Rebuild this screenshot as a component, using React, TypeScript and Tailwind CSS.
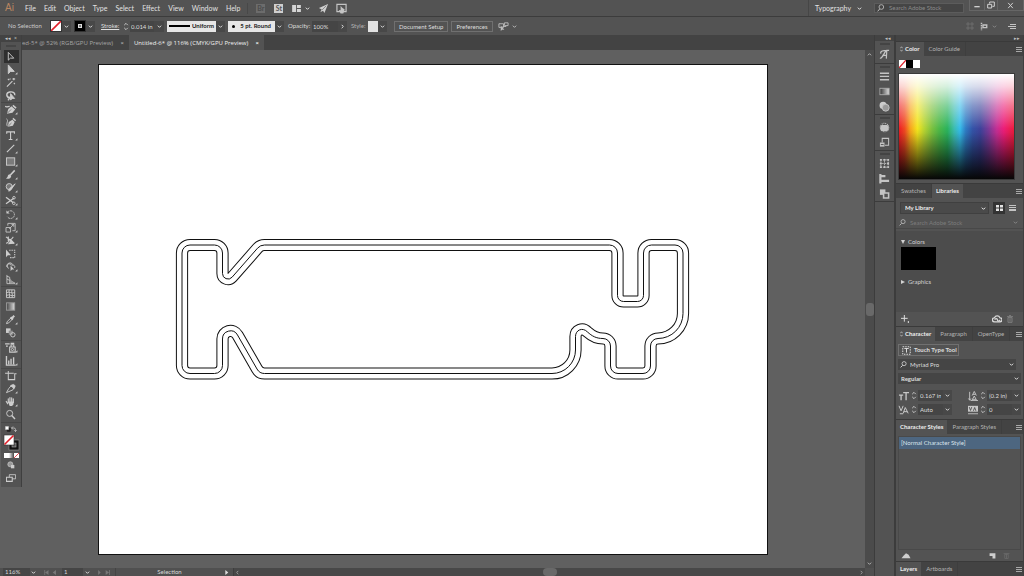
import type { ReactNode } from "react";

type IconProps = { children: ReactNode; className?: string };

function Icon({ children, className = "h-[11px] w-[11px]" }: IconProps) {
  return (
    <svg
      viewBox="0 0 12 12"
      className={`shrink-0 ${className}`}
      fill="none"
      stroke="currentColor"
      strokeWidth="1"
      aria-hidden="true"
    >
      {children}
    </svg>
  );
}

function Chevron({ className = "h-[5px] w-[5px]" }: { className?: string }) {
  return (
    <Icon className={className}>
      <path d="M2 4l4 4 4-4" strokeWidth="2.4" />
    </Icon>
  );
}

function DropButton({ label, className = "w-[9px]" }: { label: string; className?: string }) {
  return (
    <button
      aria-label={label}
      className={`flex h-[11px] shrink-0 items-center justify-center bg-[#484848] text-[#dcdcdc] ${className}`}
    >
      <Chevron />
    </button>
  );
}

function Spinner({ label }: { label: string }) {
  return (
    <button aria-label={label} className="flex h-[11px] w-[8px] shrink-0 items-center justify-center text-[#cfcfcf]">
      <svg viewBox="0 0 6 10" className="h-[9px] w-[6px]" fill="none" stroke="currentColor" aria-hidden="true">
        <path d="M1 3.500l2-2 2 2M1 6.500l2 2 2-2" />
      </svg>
    </button>
  );
}

function NoneSwatch({ className }: { className: string }) {
  return (
    <svg viewBox="0 0 10 10" preserveAspectRatio="none" className={`shrink-0 ${className}`} aria-hidden="true">
      <rect width="10" height="10" fill="#fff" />
      <path d="M0 10L10 0" stroke="#e0202a" strokeWidth="1.6" />
    </svg>
  );
}

function PanelMenu({ label }: { label: string }) {
  return (
    <button aria-label={label} className="ml-auto flex w-[9px] items-center justify-center text-[#a8a8a8]">
      <svg viewBox="0 0 6 6" className="h-[6px] w-[6px]" stroke="currentColor" aria-hidden="true">
        <path d="M0 1.500h6M0 3.500h6M0 5.500h6" />
      </svg>
    </button>
  );
}

function PanelTabs({ tabs, active, sort }: { tabs: string[]; active: number; sort?: boolean }) {
  return (
    <div role="tablist" className="flex h-[15px] shrink-0 border-t border-[#3a3a3a] bg-[#434343]">
      {tabs.map((t, i) => (
        <button
          key={t}
          role="tab"
          aria-selected={i === active}
          className={
            i === active
              ? "flex items-center gap-[2px] whitespace-nowrap bg-[#535353] px-[4px] font-bold text-[#ececec]"
              : "flex items-center whitespace-nowrap border-r border-[#3e3e3e] px-[5px] text-[#b4b4b4]"
          }
        >
          {i === active && sort && (
            <svg viewBox="0 0 4 8" className="h-[6px] w-[3px]" fill="none" stroke="#c8c8c8" aria-hidden="true">
              <path d="M0.500 3L2 1l1.500 2M0.500 5L2 7l1.500-2" />
            </svg>
          )}
          {t}
        </button>
      ))}
      <PanelMenu label={`${tabs[active]} panel menu`} />
    </div>
  );
}

type Tool = { name: string; art: ReactNode; more?: boolean };

const toolGroups: Tool[][] = [
  [
    { name: "Selection", art: <path d="M3.500 1.500v8.500l2.300-2.200h3.700z" /> },
    { name: "Direct Selection", more: true, art: <path d="M3.500 1v9.500l2.500-2.400h4z" fill="currentColor" /> },
    {
      name: "Magic Wand",
      art: <path d="M2 10.500L8 4.500M9.500 1v2.500M8 2.200h3M3 2l1.500 1.500M9.500 6.500l1.200 1.200M5.500 1.500v1.200" strokeWidth="1.200" />,
    },
    {
      name: "Lasso",
      art: (
        <>
          <path d="M4 8C1 7 1 3 5 2.200s6 1.500 5.500 3.500M3.500 6.500c-1.500 1 0 2.500 1 1.500s0 2.500-1.500 3" strokeWidth="1.500" />
          <path d="M6 4v7l1.800-1.800h2.600z" fill="currentColor" />
        </>
      ),
    },
  ],
  [
    {
      name: "Pen",
      more: true,
      art: (
        <>
          <path d="M0 2.500c2 1.500 3 0 5 0" strokeWidth="1.300" />
          <path d="M2 10.500l1.500-5 3.500-3 4 3.500-3 3.500z" fill="currentColor" stroke="none" />
          <path d="M2.500 10L6.500 6" stroke="#535353" strokeWidth=".7" />
          <path d="M8.500 1.500l3.500 3" strokeWidth="1.600" />
        </>
      ),
    },
    {
      name: "Curvature",
      art: (
        <>
          <path d="M1.500 2c3 2-1 5 1 8" />
          <path d="M3 10.500l1-5 4-2.500 2.500 2.500-2 4z" fill="currentColor" stroke="none" />
          <path d="M3.500 10L7 6.500" stroke="#535353" strokeWidth=".7" />
          <path d="M8.500 1.500L11.500 4" strokeWidth="1.500" />
        </>
      ),
    },
    { name: "Type", more: true, art: <path d="M1.800 4V2h8.400v2M6 2v8.500M4 10.300h4" strokeWidth="1.200" /> },
    { name: "Line Segment", more: true, art: <path d="M2 10L10 2" strokeWidth="1.200" /> },
    {
      name: "Rectangle",
      more: true,
      art: <rect x="1.500" y="2" width="9" height="8" fill="#7b7b7b" />,
    },
    {
      name: "Paintbrush",
      more: true,
      art: (
        <>
          <path d="M10.500 1.500L5.800 6.500" strokeWidth="1.700" />
          <path d="M5.500 5.800c-2 0-2.500 1.500-2.700 2.700L1 10.500c3 .5 5.500-.5 5.700-3z" fill="currentColor" stroke="none" />
        </>
      ),
    },
    {
      name: "Shaper",
      more: true,
      art: (
        <>
          <circle cx="4.500" cy="5" r="3.300" fill="#777" />
          <path d="M11 2L6 9l-2 1 .5-2.500z" fill="currentColor" />
        </>
      ),
    },
    {
      name: "Scissors",
      more: true,
      art: (
        <>
          <path d="M1 2.500l8 6M1 9.500l8.500-6" strokeWidth="1.400" />
          <circle cx="9.700" cy="3" r="1.400" />
          <circle cx="9.500" cy="9" r="1.400" />
        </>
      ),
    },
  ],
  [
    {
      name: "Rotate",
      more: true,
      art: (
        <>
          <path d="M3 3.200a4.200 4.200 0 1 1-.5 5.300" strokeDasharray="2 .8" />
          <path d="M1.500 1.500v3.500H5z" fill="currentColor" stroke="none" />
        </>
      ),
    },
    {
      name: "Scale",
      more: true,
      art: <path d="M1 6h5v5H1zM3 4V1.500h8v8H8M4.500 7.500l5-5M7 2.800h2.500v2.400" strokeWidth=".9" />,
    },
    {
      name: "Width",
      more: true,
      art: (
        <>
          <path d="M1 2l9 7M3.500 1.500v5M1 9c3 0 3-3 5-4s2-2 3-3" strokeWidth="1.200" />
          <path d="M3 10l4-5 3.500 4.500z" fill="currentColor" stroke="none" />
        </>
      ),
    },
    {
      name: "Free Transform",
      art: (
        <>
          <path d="M4.500 2.500h6v8h-6" strokeDasharray="1.500 1" strokeWidth="1.200" />
          <path d="M1 1.500v8.500l2-2h3.500z" fill="currentColor" stroke="none" />
        </>
      ),
    },
    {
      name: "Shape Builder",
      more: true,
      art: (
        <>
          <path d="M2 6.500a3.500 3.500 0 0 1 6.500-2.500M4 8a2.500 2.500 0 1 1 3-3.500c3-.5 4 1 3.500 3" />
          <path d="M6 5v6l1.600-1.600H10z" fill="currentColor" stroke="none" />
        </>
      ),
    },
    {
      name: "Perspective Grid",
      more: true,
      art: (
        <>
          <path d="M2 1v9.500h9M2 2.500l3 1v7M2 5.500l9 4.500" strokeWidth=".9" />
          <path d="M5 4l4 6H5z" fill="#999" stroke="none" />
        </>
      ),
    },
  ],
  [
    {
      name: "Mesh",
      art: <path d="M1.500 2h9v8.500h-9zM1.500 5c3-1.500 6 1.500 9 0M1.500 8c3-1.500 6 1.500 9 0M4.500 2c-1 3 1.500 5 0 8.500M7.500 2c-1 3 1.500 5 0 8.500" />,
    },
    {
      name: "Gradient",
      art: (
        <>
          <defs>
            <linearGradient id="tool-gradient">
              <stop stopColor="#444" />
              <stop offset="1" stopColor="#ddd" />
            </linearGradient>
          </defs>
          <rect x="1.500" y="2" width="9" height="8" fill="url(#tool-gradient)" stroke="#999" />
        </>
      ),
    },
    {
      name: "Eyedropper",
      more: true,
      art: (
        <>
          <path d="M1.500 10.500l1-2.500L7 3.800l1.400 1.400L4 9.700z" />
          <path d="M6 3.500L8.500 6M7.500 4.500L10 2" strokeWidth="2.200" />
        </>
      ),
    },
    {
      name: "Blend",
      art: (
        <>
          <rect x="1" y="1.500" width="5" height="5" fill="#ccc" stroke="none" />
          <rect x="4" y="4" width="4.500" height="4.500" fill="#8e8e8e" stroke="none" />
          <circle cx="8.500" cy="8.500" r="2.400" />
        </>
      ),
    },
  ],
  [
    {
      name: "Symbol Sprayer",
      more: true,
      art: (
        <>
          <path d="M0 2h5M1 4.500h2M5 5.500h6v5.500H5zM6.500 5V3h3v2M6 1.500h4" strokeWidth="1.200" />
          <circle cx="8" cy="8.200" r="1.200" />
        </>
      ),
    },
    {
      name: "Column Graph",
      more: true,
      art: <path d="M1.500 1v10h10M4 10V6M6.500 10V4M9.300 10V2.500" strokeWidth="1.500" />,
    },
  ],
  [
    { name: "Artboard", art: <path d="M3.500 1v2M0 3.500h9.500M3.500 3.500v7h7v-7M10.500 4h2" strokeWidth="1.100" /> },
    {
      name: "Slice",
      more: true,
      art: (
        <>
          <path d="M1.500 10.500L4 6l3-3.500 3 1.500-1.500 3.500z" />
          <path d="M6 3l4 3 1-3-2-1.500z" fill="currentColor" />
        </>
      ),
    },
    {
      name: "Hand",
      more: true,
      art: (
        <>
          <path d="M3.500 7V3M5.300 6V1.800M7.200 6V2M9 7V3.200M2.800 8.500L1.300 6" strokeWidth="1.300" strokeLinecap="round" />
          <path d="M3 6h6.600L9 9.500 7.500 11H5z" fill="currentColor" stroke="none" />
        </>
      ),
    },
    {
      name: "Zoom",
      art: (
        <>
          <circle cx="5" cy="4.800" r="3.300" />
          <path d="M7.300 7.200l3.500 3.600" strokeWidth="1.600" />
        </>
      ),
    },
  ],
];

const dockGroups: Tool[][] = [
  [
    {
      name: "Glyphs",
      art: <path d="M1 10c3 1 5-8 7.500-8.500L8 10.500M3.500 7H8.500M2 5c-1-3 3-3.500 6.500-3.500H11" strokeWidth="1.300" />,
    },
  ],
  [
    { name: "Stroke", art: <path d="M1 2.500h10M1 5.800h10M1 9.500h10" strokeWidth="1.500" /> },
    {
      name: "Gradient panel",
      art: (
        <>
          <defs>
            <linearGradient id="dock-gradient">
              <stop stopColor="#333" />
              <stop offset="1" stopColor="#ddd" />
            </linearGradient>
          </defs>
          <rect x="1" y="2.500" width="10" height="7" fill="url(#dock-gradient)" stroke="#aaa" />
        </>
      ),
    },
    {
      name: "Transparency",
      art: (
        <>
          <circle cx="4.500" cy="4.800" r="3.900" fill="#ccc" stroke="none" />
          <circle cx="7.300" cy="7.300" r="3.800" fill="#999" />
        </>
      ),
    },
  ],
  [
    {
      name: "Appearance",
      art: (
        <>
          <circle cx="6" cy="6" r="4.600" strokeDasharray="1 1" strokeWidth="1.200" />
          <rect x="1.500" y="3.200" width="9" height="6.500" rx="2" fill="currentColor" stroke="none" />
        </>
      ),
    },
    {
      name: "Graphic Styles",
      art: (
        <>
          <path d="M3.500 6V1.500H10.500v7.500H6.500" strokeWidth="1.100" />
          <path d="M1 6h5v4.500H1z" fill="currentColor" stroke="none" />
          <path d="M2 8.200h3" stroke="#535353" />
        </>
      ),
    },
  ],
  [
    {
      name: "Transform",
      art: (
        <>
          <path d="M2 2h8v8H2zM6 1v10M1 6h10" strokeDasharray="1.500 1" strokeWidth="1" />
          <path d="M1 2h2M5 2h2M9 2h2M1 6h2M9 6h2M1 10h2M5 10h2M9 10h2" strokeWidth="2" />
        </>
      ),
    },
    {
      name: "Align",
      art: <path d="M1.500 1v10.500M2 3.500h5M2 8.500h9" strokeWidth="2.400" />,
    },
    {
      name: "Pathfinder",
      art: (
        <>
          <path d="M1 1.500h6v6H1z" fill="currentColor" stroke="none" />
          <path d="M5 5.500h5.500v5.500H5z" fill="#535353" strokeWidth="1.700" />
        </>
      ),
    },
  ],
];

function Grip() {
  return (
    <div className="flex h-[4px] shrink-0 items-center justify-center">
      <div className="h-[2px] w-[10px] bg-[#444]" />
    </div>
  );
}

function MenuBar() {
  const menus = ["File", "Edit", "Object", "Type", "Select", "Effect", "View", "Window", "Help"];
  return (
    <header className="flex h-[17px] shrink-0 items-center border-b border-[#3c3c3c] text-[7px] text-[#e2e2e2]">
      <span className="w-[21px] pl-[5px] font-['Liberation_Sans'] text-[10px] leading-none text-[#b98560]">Ai</span>
      <nav className="flex items-center">
        {menus.map((m) => (
          <button key={m} className="px-[4px]">
            {m}
          </button>
        ))}
      </nav>
      <div className="ml-[3px] flex items-center border-l border-[#484848] pl-[8px]">
        <button className="h-[9px] w-[9px] bg-[#6c6c6c] text-[7px] font-bold leading-[9px] text-[#4b4b4b]">Br</button>
        <button className="ml-[9px] h-[9px] w-[9px] bg-[#cfcfcf] text-[7px] font-bold leading-[9px] text-[#555]">St</button>
        <button aria-label="Arrange documents" className="ml-[9px] flex items-center gap-[4px]">
          <svg viewBox="0 0 10 8" className="h-[7px] w-[9px]" fill="#d4d4d4" aria-hidden="true">
            <path d="M0 0h4.500v8H0zM5.500 0H10v3.500H5.500zM5.500 4.500H10V8H5.500z" />
          </svg>
          <Chevron />
        </button>
        <button aria-label="GPU performance" className="ml-[8px] text-[#cfcfcf]">
          <Icon className="h-[11px] w-[11px]">
            <path d="M11 1L1 5.500l3 1.500L2.500 10 5.500 8.500 7 11z" fill="currentColor" stroke="none" />
            <path d="M4.500 7.500L9 3" stroke="#535353" strokeWidth=".6" />
          </Icon>
        </button>
        <button aria-label="Touch workspace" className="ml-[7px] text-[#c4c4c4]">
          <Icon className="h-[11px] w-[11px]">
            <path d="M1 1.500h10v8H1z" strokeWidth="1.300" />
            <path d="M5 3l1.500 2 3 2-1.500 4.500H5L3 7.500l2 .5z" fill="currentColor" stroke="none" />
          </Icon>
        </button>
      </div>
      <div className="ml-auto flex h-full">
        <button className="flex items-center gap-[6px] border-l border-[#464646] px-[6px]">
          Typography
          <Chevron />
        </button>
        <label className="my-[3px] ml-[6px] mr-[5px] flex w-[90px] items-center gap-[4px] border border-[#5c5c5c] bg-[#454545] pl-[2px] text-[#bbb]">
          <Icon className="h-[8px] w-[8px]">
            <circle cx="6.500" cy="4.500" r="3.500" strokeWidth="1.300" />
            <path d="M4 7.500L1 11" strokeWidth="1.500" />
          </Icon>
          <input
            aria-label="Search Adobe Stock"
            placeholder="Search Adobe Stock"
            className="w-full min-w-0 bg-transparent text-[6px] outline-none placeholder:text-[#8b8b8b]"
          />
        </label>
        <div className="flex h-[11px] border border-t-0 border-[#666] text-[#d0d0d0]">
          <button aria-label="Minimize" className="flex w-[14px] items-center justify-center">
            <Icon className="h-[8px] w-[8px]">
              <path d="M2 8.500h8" strokeWidth="2" />
            </Icon>
          </button>
          <button aria-label="Restore" className="flex w-[14px] items-center justify-center border-x border-[#666]">
            <Icon className="h-[8px] w-[8px]">
              <path d="M1 5h6v5.500H1zM4 4V1.500h7V8H8" strokeWidth="1.500" />
            </Icon>
          </button>
          <button aria-label="Close" className="flex w-[25px] items-center justify-center">
            <Icon className="h-[7px] w-[7px]">
              <path d="M2 1.500l8 9M10 1.500l-8 9" strokeWidth="1.700" />
            </Icon>
          </button>
        </div>
      </div>
    </header>
  );
}

function ControlBar() {
  return (
    <div className="flex h-[18px] shrink-0 items-center text-[#dedede]">
      <span className="ml-[8px] w-[42px] whitespace-nowrap text-[#c8c8c8]">No Selection</span>
      <button aria-label="Fill" className="border border-[#333]">
        <NoneSwatch className="h-[10px] w-[10px]" />
      </button>
      <DropButton label="Fill options" />
      <button aria-label="Stroke color" className="ml-[3px] flex h-[12px] w-[12px] items-center justify-center border border-[#333] bg-black">
        <span className="h-[4px] w-[4px] border border-[#ddd] bg-[#777]" />
      </button>
      <DropButton label="Stroke color options" />
      <label htmlFor="weight" className="ml-[6px] w-[21px] whitespace-nowrap underline">Stroke:</label>
      <Spinner label="Step stroke weight" />
      <input id="weight" defaultValue="0.014 in" className="h-[11px] w-[24px] bg-[#454545] px-[1px] outline-none" />
      <DropButton label="Stroke weight options" className="w-[10px]" />
      <button className="ml-[3px] flex h-[11px] w-[49px] items-center gap-[2px] bg-[#e6e6e6] px-[2px] font-bold text-[#222]">
        <span className="h-[2px] flex-1 bg-black" />
        Uniform
      </button>
      <DropButton label="Width profile" />
      <button className="ml-[3px] flex h-[11px] w-[47px] items-center justify-between bg-[#e6e6e6] px-[4px] font-bold text-[#222]">
        <span className="h-[3px] w-[3px] rounded-full bg-black" />
        5 pt. Round
      </button>
      <DropButton label="Brush definition" />
      <label htmlFor="opacity" className="ml-[4px] w-[24px] whitespace-nowrap">Opacity:</label>
      <input id="opacity" defaultValue="100%" className="h-[11px] w-[26px] bg-[#454545] px-[1px] outline-none" />
      <button aria-label="Opacity options" className="flex h-[11px] w-[9px] items-center justify-center bg-[#484848]">
        <Chevron className="h-[5px] w-[5px] -rotate-90" />
      </button>
      <span className="ml-[4px] w-[17px] text-[#b4b4b4]">Style:</span>
      <button aria-label="Graphic style" className="h-[11px] w-[10px] bg-[#e2e2e2]" />
      <DropButton label="Graphic style options" />
      <button className="ml-[7px] h-[11px] whitespace-nowrap border border-[#707070] px-[4px] leading-[9px]">Document Setup</button>
      <button className="ml-[3px] h-[11px] border border-[#707070] px-[4px] leading-[9px]">Preferences</button>
      <button aria-label="Select similar" className="ml-[5px] flex items-center gap-[3px] text-[#bbb]">
        <Icon>
          <path d="M1 3h5v4H1zM7 2h4v3H7zM5 6h4" />
          <path d="M3 5v6l1.500-1.500H7z" fill="currentColor" stroke="none" />
        </Icon>
        <Chevron />
      </button>
      <div className="ml-auto mr-[8px] flex items-center text-[#c4c4c4]">
        <Icon className="h-[8px] w-[8px] text-[#777]">
          <path d="M1.500 1.500h3v3h-3zM7.500 1.500h3v3h-3zM1.500 7.500h3v3h-3zM7.500 7.500h3v3h-3z" strokeWidth="1" />
        </Icon>
        <button aria-label="Align to" className="ml-[6px] flex items-center gap-[3px]">
          <Icon className="h-[9px] w-[9px]">
            <path d="M2 1v10" strokeWidth="2" strokeDasharray="2 1" />
            <path d="M4 4h5v3.500H4z" strokeWidth="1.800" />
          </Icon>
          <Chevron className="h-[5px] w-[5px] text-[#888]" />
        </button>
        <button aria-label="Control bar menu" className="ml-[11px]">
          <svg viewBox="0 0 8 6" className="h-[6px] w-[8px]" stroke="currentColor" aria-hidden="true">
            <path d="M2 1.500h6M0 3.500h8M2 5.500h6" />
          </svg>
        </button>
      </div>
    </div>
  );
}

function Toolbar() {
  return (
    <aside className="absolute left-[1px] top-0 flex w-[21px] flex-col border-r border-[#3f3f3f] bg-[#535353] pb-[3px] text-[#cdcdcd]">
      <div className="flex h-[7px] items-center justify-between bg-[#434343] px-[4px] text-[5px] leading-none">
        <span>◂◂</span>
        <span>×</span>
      </div>
      <div className="flex h-[8px] items-center justify-center">
        <div className="h-[2px] w-[10px] bg-[#454545]" />
      </div>
      {toolGroups.map((group, g) => (
        <div key={g} className={`flex flex-col items-center border-b border-[#484848] ${g > 2 ? "pb-[1px]" : ""}`}>
          {group.map((tool, i) => (
            <button
              key={tool.name}
              aria-label={tool.name}
              className={`flex h-[13px] w-[15px] items-center justify-center ${g === 0 && i === 0 ? "bg-[#2f2f2f]" : ""}`}
            >
              <svg viewBox="0 0 14 12" className="h-[11px] w-[13px]" fill="none" stroke="currentColor" aria-hidden="true">
                {tool.art}
                {tool.more && <path d="M13.500 9v2.500H11z" fill="currentColor" stroke="none" />}
              </svg>
            </button>
          ))}
        </div>
      ))}
      <div className="flex h-[11px] items-center justify-between px-[4px]">
        <button aria-label="Default fill and stroke">
          <Icon className="h-[6px] w-[6px]">
            <path d="M4.500 4.500h6v6h-6z" fill="#222" stroke="#222" strokeWidth="2" />
            <path d="M1 1h6v6H1z" fill="#fff" />
          </Icon>
        </button>
        <button aria-label="Swap fill and stroke">
          <Icon className="h-[6px] w-[6px]">
            <path d="M1 4h5q3 0 3 3v4M4 1L1 4l3 3M6.500 8.500L9 11l2.500-2.500" strokeWidth="1.500" />
          </Icon>
        </button>
      </div>
      <svg viewBox="0 0 17 17" className="mx-auto h-[17px] w-[17px]" aria-hidden="true">
        <rect x="6" y="6" width="10" height="10" fill="#111" stroke="#999" strokeWidth=".6" />
        <rect x="9" y="9" width="4" height="4" fill="#535353" stroke="#aaa" strokeWidth=".6" />
        <rect x="1" y="1" width="10" height="10" fill="#fff" stroke="#333" strokeWidth=".6" />
        <path d="M1.500 10.500l9-9" stroke="#e0202a" strokeWidth="1.600" />
      </svg>
      <div className="mt-[2px] flex h-[5px] justify-center">
        <button aria-label="Color" className="w-[5px] bg-white" />
        <button aria-label="Gradient fill" className="w-[5px] bg-linear-to-r from-white to-[#444]" />
        <button aria-label="None">
          <NoneSwatch className="h-[5px] w-[5px]" />
        </button>
      </div>
      <button aria-label="Drawing mode" className="flex h-[14px] items-center justify-center">
        <Icon className="h-[8px] w-[8px]">
          <circle cx="5" cy="5" r="3.800" fill="#999" />
          <path d="M6 6h5v5H6z" fill="currentColor" stroke="none" />
        </Icon>
      </button>
      <button aria-label="Screen mode" className="flex h-[12px] items-center justify-center">
        <Icon className="h-[10px] w-[10px]">
          <path d="M4 2h7.500v5H4z" />
          <path d="M.5 5h7v5h-7z" fill="#535353" strokeWidth="1.300" />
        </Icon>
      </button>
    </aside>
  );
}

const outline =
  "M182 253A8 8 0 0 1 190 245H214.500A8 8 0 0 1 222.500 253V273.500A5.500 5.500 0 0 0 232.100 277.200L257.500 248.200Q260.300 245 264.500 245H609.500A8 8 0 0 1 617.500 253V295.500A6 6 0 0 0 623.500 301.500H637.500A6 6 0 0 0 643.500 295.500V253A8 8 0 0 1 651.500 245H675A8 8 0 0 1 683 253V313.500A25 25 0 0 1 658 338.500A7.500 7.500 0 0 0 650.500 346V366A7.500 7.500 0 0 1 643 373.500H618A7.500 7.500 0 0 1 610.500 366V346A7.500 7.500 0 0 0 603 338.500C596 338.500 592 336 587.500 332C582.500 326.800 575.500 330 575.500 336.500V350A23.500 23.500 0 0 1 552 373.500H264.500Q259.500 373.500 257 369L237.500 335A8 8 0 0 0 222.500 339V365.500A8 8 0 0 1 214.500 373.500H190A8 8 0 0 1 182 365.500Z";

function DocumentArea() {
  return (
    <main className="relative flex min-w-0 flex-1 flex-col border-r border-[#3c3c3c] bg-[#606060]">
      <div role="tablist" className="flex h-[15px] shrink-0 bg-[#434343] pl-[22px] font-['Open_Sans','Noto_Sans',sans-serif]">
        <button role="tab" aria-selected="false" className="flex w-[107px] items-center justify-between overflow-hidden whitespace-nowrap pr-[5px] text-[#a6a6a6]">
          ed-5* @ 52% (RGB/GPU Preview)
          <span className="font-bold">×</span>
        </button>
        <button role="tab" aria-selected="true" className="flex w-[135px] items-center justify-between whitespace-nowrap bg-[#535353] pl-[5px] pr-[5px] font-medium text-[#f2f2f2]">
          Untitled-6* @ 116% (CMYK/GPU Preview)
          <span className="font-bold">×</span>
        </button>
      </div>
      <div className="flex min-h-0 flex-1">
        <div className="min-w-0 flex-1 overflow-hidden pl-[98px] pt-[14px]">
          <svg viewBox="98 64 670 491" className="h-[491px] w-[670px] max-w-none" aria-label="Artboard">
            <rect x="98.500" y="64.500" width="669" height="490" fill="#fff" stroke="#111" />
            <g fill="none" strokeLinejoin="round">
              <path d={outline} stroke="#111" strokeWidth="12.200" />
              <path d={outline} stroke="#fff" strokeWidth="10.200" />
              <path d={outline} stroke="#111" />
            </g>
          </svg>
        </div>
        <div className="flex w-[9px] shrink-0 flex-col items-center justify-between bg-[#4b4b4b] py-[2px] text-[#b0b0b0]">
          <button aria-label="Scroll up">
            <Chevron className="h-[5px] w-[5px] rotate-180" />
          </button>
          <div className="h-[13px] w-[8px] rounded-[3px] bg-[#696969]" />
          <button aria-label="Scroll down">
            <Chevron />
          </button>
        </div>
      </div>
      <footer className="flex h-[8px] shrink-0 items-center bg-[#505050] text-[#d8d8d8]">
        <input aria-label="Zoom level" defaultValue="116%" className="ml-[3px] h-[8px] w-[27px] bg-[#454545] px-[2px] outline-none" />
        <button aria-label="Zoom presets" className="flex w-[7px] justify-center">
          <Chevron />
        </button>
        <svg viewBox="0 0 16 6" className="ml-[7px] h-[5px] w-[14px]" fill="#777" aria-hidden="true">
          <path d="M0 0h1v6H0zM5 0v6L1 3zM14 0v6l-4-3z" />
        </svg>
        <input aria-label="Artboard number" defaultValue="1" className="ml-[4px] h-[8px] w-[21px] bg-[#454545] px-[2px] outline-none" />
        <button aria-label="Artboard list" className="flex w-[9px] justify-center">
          <Chevron />
        </button>
        <svg viewBox="0 0 14 6" className="ml-[5px] h-[5px] w-[14px]" fill="#777" aria-hidden="true">
          <path d="M0 0v6l3-3zM9 0v6l4-3zM13 0h1v6h-1z" />
        </svg>
        <span className="ml-[4px] w-[108px] border-l border-[#444] text-center leading-[8px]">Selection</span>
        <svg viewBox="0 0 4 6" className="ml-[2px] h-[5px] w-[4px]" fill="#ddd" aria-hidden="true">
          <path d="M0 0v6l3.500-3z" />
        </svg>
        <div className="ml-[4px] flex h-[8px] flex-1 items-center justify-between border-l border-[#3e3e3e] bg-[#484848] px-[1px] text-[#999]">
          <Chevron className="h-[5px] w-[5px] rotate-90" />
          <div className="h-[8px] w-[14px] rounded-[4px] bg-[#696969]" />
          <Chevron className="h-[5px] w-[5px] -rotate-90" />
        </div>
        <div className="w-[9px]" />
      </footer>
      <Toolbar />
    </main>
  );
}

function Dock() {
  return (
    <div className="flex w-[21px] shrink-0 flex-col border-r-2 border-[#3c3c3c] text-[#c4c4c4]">
      <button aria-label="Expand panels" className="h-[6px] bg-[#434343] pr-[3px] text-right text-[5px] leading-[6px]">
        ◂◂
      </button>
      {dockGroups.map((group, g) => (
        <div key={g} className="flex flex-col items-center border-b border-[#3c3c3c] pt-[1px]">
          <Grip />
          {group.map((tool) => (
            <button
              key={tool.name}
              aria-label={tool.name}
              className={`flex items-center justify-center ${g === 0 ? "h-[17px]" : "h-[15px]"}`}
            >
              <Icon>{tool.art}</Icon>
            </button>
          ))}
        </div>
      ))}
    </div>
  );
}

function ColorPanel() {
  return (
    <section className="flex h-[142px] shrink-0 flex-col">
      <PanelTabs tabs={["Color", "Color Guide"]} active={0} sort />
      <div className="ml-[3px] mt-[4px] flex">
        <NoneSwatch className="h-[8px] w-[7px]" />
        <span className="h-[8px] w-[7px] bg-black" />
        <span className="h-[8px] w-[7px] bg-white" />
      </div>
      <div
        role="img"
        aria-label="Color spectrum"
        className="ml-[2px] mr-[8px] mt-[5px] h-[107px] border border-[#3a3a3a] bg-[linear-gradient(to_bottom,#fff_0%,rgba(255,255,255,0.8)_12%,rgba(255,255,255,0.4)_30%,rgba(255,255,255,0)_52%,rgba(0,0,0,0.05)_56%,rgba(0,0,0,0.5)_78%,#060606_100%),linear-gradient(to_right,#ed1c24_0%,#f04a22_5%,#f7a51c_10%,#f3e51d_16%,#b6d433_22%,#78c040_29%,#4db848_35%,#2bb35c_42%,#3bbcb0_48%,#35bdea_53%,#2f7cc4_58%,#3454a8_64%,#3f429a_71%,#7a3a98_78%,#c42f94_85%,#ec1e79_91%,#ee1c3c_100%)]"
      />
    </section>
  );
}

function LibrariesPanel() {
  return (
    <section className="flex h-[143px] shrink-0 flex-col">
      <PanelTabs tabs={["Swatches", "Libraries"]} active={1} />
      <div className="mt-[4px] flex h-[12px] items-center pl-[4px] pr-[5px]">
        <div className="flex h-full flex-1 items-center border border-[#404040] bg-[#4a4a4a] pr-[2px] text-[#ececec]">
          <select aria-label="Library" className="min-w-0 flex-1 appearance-none bg-transparent pl-[4px] font-bold outline-none">
            <option>My Library</option>
          </select>
          <Chevron />
        </div>
        <button aria-label="Grid view" className="ml-[4px] flex h-[12px] w-[12px] items-center justify-center bg-[#333]">
          <svg viewBox="0 0 7 6" className="h-[6px] w-[7px]" fill="#e2e2e2" aria-hidden="true">
            <path d="M0 0h3v2.500H0zM4 0h3v2.500H4zM0 3.500h3V6H0zM4 3.500h3V6H4z" />
          </svg>
        </button>
        <button aria-label="List view" className="ml-[2px] flex h-[12px] w-[11px] items-center justify-center">
          <svg viewBox="0 0 7 6" className="h-[6px] w-[7px]" stroke="#c4c4c4" aria-hidden="true">
            <path d="M0 .5h7M0 2.500h7M0 4.500h7M0 5.500h7" />
          </svg>
        </button>
      </div>
      <label className="mt-[3px] flex h-[12px] items-center gap-[4px] border-b border-[#484848] pl-[3px] pr-[5px] text-[#b4b4b4]">
        <Icon className="h-[7px] w-[7px]">
          <circle cx="7" cy="4.500" r="3.500" strokeWidth="1.500" />
          <path d="M4.500 7.500L1 11" strokeWidth="1.700" />
        </Icon>
        <input
          aria-label="Search library"
          placeholder="Search Adobe Stock"
          className="min-w-0 flex-1 bg-transparent outline-none placeholder:text-[#7c7c7c]"
        />
        <Chevron className="h-[5px] w-[5px] text-[#888]" />
      </label>
      <div className="mt-[2px] flex flex-1 flex-col items-start bg-[#4c4c4c] pl-[5px] pt-[6px] text-[#d2d2d2]">
        <button className="flex h-[9px] items-center gap-[3px]">
          <svg viewBox="0 0 4 4" className="h-[4px] w-[4px]" fill="currentColor" aria-hidden="true">
            <path d="M0 0h4L2 4z" />
          </svg>
          Colors
        </button>
        <button aria-label="Black" className="mt-[1px] h-[23px] w-[35px] bg-black" />
        <button className="mt-[7px] flex h-[9px] items-center gap-[3px]">
          <svg viewBox="0 0 4 4" className="h-[4px] w-[4px]" fill="currentColor" aria-hidden="true">
            <path d="M0 0v4l4-2z" />
          </svg>
          Graphics
        </button>
      </div>
      <div className="flex h-[14px] items-center pl-[5px] pr-[9px] text-[#dcdcdc]">
        <button aria-label="Add content">
          <Icon className="h-[8px] w-[8px]">
            <path d="M5 0v10M0 5h10M11 9v3" strokeWidth="1.500" />
          </Icon>
        </button>
        <button aria-label="Creative Cloud sync" className="ml-auto">
          <Icon className="h-[10px] w-[10px]">
            <path d="M3 9.500a2.500 2.500 0 0 1 0-5 3.500 3.500 0 0 1 6.500 0 2.500 2.500 0 0 1 0 5z" strokeWidth="1.500" />
            <path d="M3.500 7a1.500 1.500 0 0 1 3 0 1.500 1.500 0 0 0 3 0" strokeWidth="1.500" />
          </Icon>
        </button>
        <button aria-label="Delete" className="ml-[4px] text-[#858585]">
          <Icon className="h-[8px] w-[8px]">
            <path d="M1.500 2.500h9M4.500 1h3M3 4h6v7H3zM6 5v5" strokeWidth="1.300" />
          </Icon>
        </button>
      </div>
    </section>
  );
}

function Metric({ name, value, art }: { name: string; value: string; art: ReactNode }) {
  return (
    <div className="flex items-center">
      <Icon className="h-[10px] w-[12px] text-[#c8c8c8]">{art}</Icon>
      <Spinner label={`Step ${name}`} />
      <input aria-label={name} defaultValue={value} className="h-[11px] w-[25px] bg-[#454545] px-[2px] outline-none" />
      <DropButton label={`${name} options`} />
    </div>
  );
}

function CharacterPanel() {
  return (
    <section className="flex h-[93px] shrink-0 flex-col">
      <PanelTabs tabs={["Character", "Paragraph", "OpenType"]} active={0} sort />
      <div className="flex flex-col gap-[3px] pl-[2px] pr-[2px] pt-[3px] text-[#dedede]">
        <button className="flex h-[12px] w-[61px] items-center gap-[3px] whitespace-nowrap border border-[#707070] pl-[3px] font-bold">
          <Icon className="h-[9px] w-[9px]">
            <path d="M1 1h10v10H1z" strokeDasharray="2 1.300" strokeWidth="1.300" />
            <path d="M3.500 4V3.300h5V4M6 3.300v5.500" strokeWidth="1.300" />
          </Icon>
          Touch Type Tool
        </button>
        <label className="mr-[5px] flex h-[11px] items-center gap-[3px] bg-[#454545] pl-[2px]">
          <Icon className="h-[7px] w-[7px]">
            <circle cx="7" cy="4.500" r="3.500" strokeWidth="1.300" />
            <path d="M4.500 7.500L1 11" strokeWidth="1.600" />
          </Icon>
          <input aria-label="Font family" defaultValue="Myriad Pro" className="min-w-0 flex-1 bg-transparent outline-none" />
          <Chevron className="mr-[2px] h-[5px] w-[5px]" />
        </label>
        <div className="flex h-[11px] items-center bg-[#454545]">
          <select aria-label="Font style" className="min-w-0 flex-1 appearance-none bg-transparent pl-[3px] font-bold outline-none">
            <option>Regular</option>
          </select>
          <Chevron className="mr-[2px] h-[5px] w-[5px]" />
        </div>
        <div className="mt-[3px] flex flex-col gap-[3px]">
          <div className="flex justify-between">
            <Metric name="Font size" value="0.167 in" art={<path d="M0 5h5M2.500 5v6M5 2h7M8.500 2v9" strokeWidth="1.600" />} />
            <Metric
              name="Leading"
              value="(0.2 in)"
              art={<path d="M5 5.500l2.500-5 2.500 5M6 4h3M4.500 11.500l3-5.500 3 5.500M5.500 10h4M2 1v10M.5 9L2 11l1.500-2M3 11.500h9" strokeWidth="1.100" />}
            />
          </div>
          <div className="flex justify-between">
            <Metric
              name="Kerning"
              value="Auto"
              art={<path d="M0 1l2.500 6L5 1M5 10L7.500 3 11 10M6 8h4M1 10.500h4" strokeWidth="1.200" />}
            />
            <Metric
              name="Tracking"
              value="0"
              art={
                <>
                  <path d="M0 1h12v7H0z" fill="#c8c8c8" stroke="none" />
                  <path d="M0 10.500h12" />
                  <path d="M1.500 2.500l1.500 4 1.500-4M6.500 7L8 3l1.500 4" stroke="#444" />
                </>
              }
            />
          </div>
        </div>
      </div>
    </section>
  );
}

function StylesPanel() {
  return (
    <section className="flex min-h-0 flex-1 flex-col">
      <PanelTabs tabs={["Character Styles", "Paragraph Styles"]} active={0} />
      <div className="mx-[2px] mt-[2px] flex min-h-0 flex-1 flex-col border border-[#494949]">
        <button className="h-[12px] bg-[#4d6680] pl-[2px] text-left leading-[12px] text-[#dce4ec]">[Normal Character Style]</button>
      </div>
      <div className="flex h-[10px] items-center pl-[5px] pr-[13px] text-[#cfcfcf]">
        <Icon className="h-[9px] w-[10px]">
          <path d="M0 9.500L3 6l3-3 3.500 2L12 9.500z" fill="currentColor" stroke="none" />
        </Icon>
        <button aria-label="New style" className="ml-auto">
          <Icon className="h-[7px] w-[7px]">
            <path d="M1 2h10v9H6V7H1z" fill="currentColor" stroke="none" />
          </Icon>
        </button>
        <button aria-label="Delete style" className="ml-[7px] text-[#6c6c6c]">
          <Icon className="h-[7px] w-[7px]">
            <path d="M1 2.500h10M3 4h6v7H3zM6 4v7" strokeWidth="1.300" />
          </Icon>
        </button>
      </div>
    </section>
  );
}

export default function App() {
  return (
    <div className="flex h-screen min-h-0 flex-col overflow-hidden bg-[#535353] font-[Lato,'Noto_Sans',sans-serif] text-[6px] leading-[8px]">
      <MenuBar />
      <ControlBar />
      <div className="flex min-h-0 flex-1">
        <DocumentArea />
        <Dock />
        <aside className="flex w-[128px] shrink-0 flex-col border-r border-[#3f3f3f]">
          <button aria-label="Collapse panels" className="h-[6px] shrink-0 bg-[#434343] pr-[3px] text-right text-[5px] leading-[6px] text-[#c4c4c4]">
            ▸▸
          </button>
          <ColorPanel />
          <LibrariesPanel />
          <CharacterPanel />
          <StylesPanel />
          <div className="mt-[1px] shrink-0">
            <PanelTabs tabs={["Layers", "Artboards"]} active={0} />
          </div>
        </aside>
      </div>
    </div>
  );
}
